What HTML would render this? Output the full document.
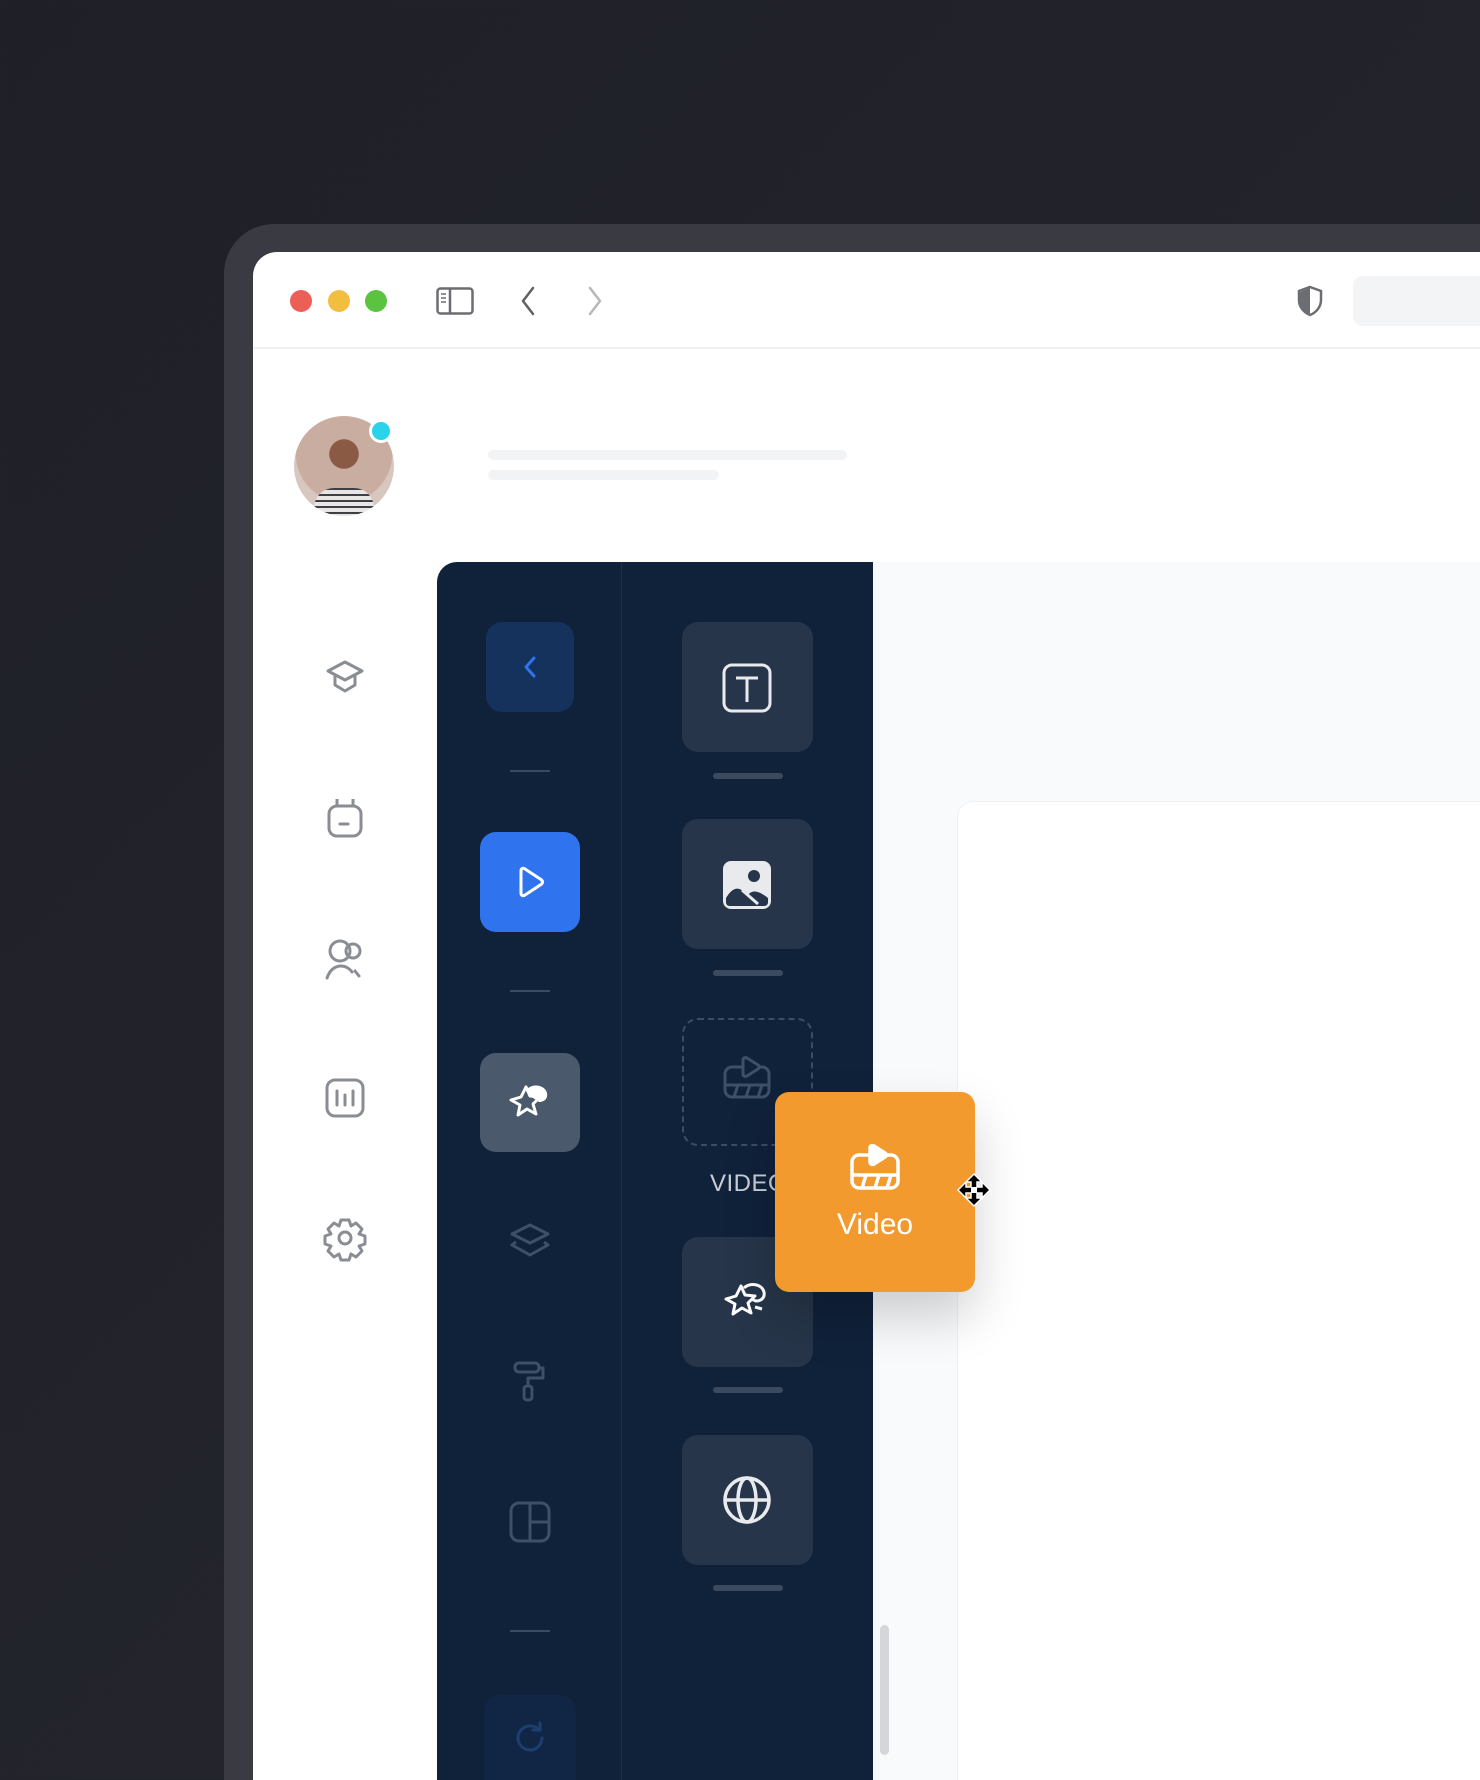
<!DOCTYPE html>
<html><head><meta charset="utf-8"><style>
*{margin:0;padding:0;box-sizing:border-box}
html{width:1480px;height:1780px;overflow:hidden}
body{width:1480px;height:1780px;overflow:hidden;background:linear-gradient(135deg,#1f2027 0%,#23242c 60%,#272830 100%);font-family:"Liberation Sans",sans-serif;position:relative}
.a{position:absolute}
svg{position:absolute;overflow:visible}
.card{position:absolute;left:682px;width:131px;height:130px;border-radius:16px;background:#263549}
.bar{position:absolute;left:713px;width:70px;height:6px;border-radius:3px;background:#3b4a5e}
.ln{position:absolute;left:510px;width:40px;height:2px;background:#3b4a5e}
</style></head><body>
<div class="a" style="left:224px;top:224px;width:1256px;height:1556px;border-radius:50px 0 0 0;background:#3a3b42"></div>
<div class="a" style="left:253px;top:252px;width:1227px;height:1528px;border-radius:24px 0 0 0;background:#fff"></div>
<div class="a" style="left:253px;top:347px;width:1227px;height:2px;background:#f0f1f3"></div>
<div class="a" style="left:290px;top:290px;width:22px;height:22px;border-radius:50%;background:#ec5f57"></div>
<div class="a" style="left:328px;top:290px;width:22px;height:22px;border-radius:50%;background:#f3bd40"></div>
<div class="a" style="left:365px;top:290px;width:22px;height:22px;border-radius:50%;background:#5ac33f"></div>
<svg style="left:436px;top:287px" width="38" height="28" viewBox="0 0 38 28"><rect x="1.5" y="1.5" width="35" height="25" rx="3" fill="none" stroke="#6b6d72" stroke-width="2.5"/><line x1="14" y1="2" x2="14" y2="26" stroke="#6b6d72" stroke-width="2.5"/><path d="M5 7h5M5 11h5M5 15h5" stroke="#6b6d72" stroke-width="1.5"/></svg>
<svg style="left:520px;top:286px" width="16" height="30"><path d="M13 2L3 15L13 28" fill="none" stroke="#5f6165" stroke-width="2.5" stroke-linecap="round" stroke-linejoin="round"/></svg>
<svg style="left:587px;top:286px" width="16" height="30"><path d="M3 2L13 15L3 28" fill="none" stroke="#b5b7ba" stroke-width="2.5" stroke-linecap="round" stroke-linejoin="round"/></svg>
<svg style="left:1296px;top:285px" width="28" height="32" viewBox="0 0 28 32"><path d="M14 2L25 6V15C25 23 19 28 14 30C9 28 3 23 3 15V6Z" fill="none" stroke="#6b6d72" stroke-width="2.5"/><path d="M14 3V29C9 27 4 22 4 15V7Z" fill="#6b6d72"/></svg>
<div class="a" style="left:1353px;top:276px;width:140px;height:50px;border-radius:10px;background:#f3f4f6"></div>
<div class="a" style="left:294px;top:416px;width:100px;height:100px;border-radius:50%;background:radial-gradient(circle at 50% 38%,#8a5a45 0 18%,#c9ada0 19% 60%,#d8c7bf 61%);overflow:hidden"><div class="a" style="left:20px;top:72px;width:60px;height:30px;background:repeating-linear-gradient(0deg,#e8e6e4 0 4px,#3d3f45 4px 6px);border-radius:20px 20px 0 0"></div></div>
<div class="a" style="left:369px;top:419px;width:24px;height:24px;border-radius:50%;background:#29d3ea;border:3px solid #fff"></div>
<div class="a" style="left:488px;top:450px;width:359px;height:10px;border-radius:5px;background:#f2f3f5"></div>
<div class="a" style="left:488px;top:470px;width:231px;height:10px;border-radius:5px;background:#f2f3f5"></div>
<svg style="left:325px;top:658px" width="40" height="40" viewBox="0 0 40 40" fill="none" stroke="#8a8d93" stroke-width="3" stroke-linejoin="round"><path d="M20 4L37 13L20 22L3 13Z"/><path d="M10 17V27L20 33L30 27V17"/></svg>
<svg style="left:326px;top:796px" width="38" height="44" viewBox="0 0 38 44" fill="none" stroke="#8a8d93" stroke-width="3"><rect x="3" y="10" width="32" height="30" rx="8"/><path d="M11 3V10M27 3V10"/><path d="M14 28h8" stroke-linecap="round"/></svg>
<svg style="left:324px;top:938px" width="42" height="42" viewBox="0 0 42 42" fill="none" stroke="#8a8d93" stroke-width="3" stroke-linecap="round"><circle cx="16" cy="13" r="10"/><circle cx="29" cy="13" r="7"/><path d="M3 40C6 31 12 28 17 28C22 28 26 31 28 34"/><path d="M31 33L35 38"/></svg>
<svg style="left:324px;top:1077px" width="42" height="42" viewBox="0 0 42 42" fill="none" stroke="#8a8d93" stroke-width="3" stroke-linecap="round"><rect x="3" y="3" width="36" height="36" rx="8"/><path d="M13 14V28M21 18V28M29 14V28"/></svg>
<svg style="left:324px;top:1217px" width="42" height="42" viewBox="0 0 42 42" fill="none" stroke="#8a8d93" stroke-width="3" stroke-linejoin="round"><path d="M17 3h8l2 6 5-3 6 6-3 5 6 2v8l-6 2 3 5-6 6-5-3-2 6h-8l-2-6-5 3-6-6 3-5-6-2v-8l6-2-3-5 6-6 5 3z"/><circle cx="21" cy="21" r="6"/></svg>
<div class="a" style="left:437px;top:562px;width:436px;height:1218px;border-radius:20px 0 0 0;background:#10213a"></div>
<div class="a" style="left:621px;top:562px;width:1px;height:1218px;background:#1e2f47"></div>
<div class="a" style="left:873px;top:562px;width:607px;height:1218px;background:#f8fafc"></div>
<div class="a" style="left:957px;top:801px;width:523px;height:979px;border-radius:16px 0 0 0;background:#fff;border:1px solid #eef0f3;border-right:none;border-bottom:none"></div>
<div class="a" style="left:880px;top:1625px;width:9px;height:130px;border-radius:5px;background:#d4d6da"></div>
<div class="a" style="left:486px;top:622px;width:88px;height:90px;border-radius:16px;background:#15325d"></div>
<svg style="left:520px;top:655px" width="20" height="24"><path d="M14 3L6 12L14 21" fill="none" stroke="#2f74ee" stroke-width="3" stroke-linecap="round" stroke-linejoin="round"/></svg>
<div class="ln" style="top:770px"></div>
<div class="a" style="left:480px;top:832px;width:100px;height:100px;border-radius:16px;background:#2f74ee"></div>
<svg style="left:516px;top:866px" width="30" height="32" viewBox="0 0 30 32"><path d="M5 5C5 2.5 7 1.5 9 3L25 13.5C27 15 27 17 25 18.5L9 29C7 30.5 5 29.5 5 27Z" fill="none" stroke="#fff" stroke-width="3" stroke-linejoin="round"/></svg>
<div class="ln" style="top:990px"></div>
<div class="a" style="left:480px;top:1053px;width:100px;height:99px;border-radius:16px;background:#4a5a6c"></div>
<svg style="left:505px;top:1078px" width="50" height="50" viewBox="0 0 50 50"><path d="M21 9L25 18L35 19L28 26L31 36L22 31L13 37L15 27L6 22L16 19Z" fill="none" stroke="#fff" stroke-width="3" stroke-linejoin="round"/><path d="M22 11C28 5 40 7 42 15C43 20 40 24 34 24L28 20Z" fill="#fff"/></svg>
<svg style="left:508px;top:1222px" width="44" height="40" viewBox="0 0 44 40" fill="none" stroke="#3d5068" stroke-width="3" stroke-linejoin="round"><path d="M22 3L40 12L22 21L4 12Z"/><path d="M8 20L4 23L22 33L40 23L36 20"/></svg>
<svg style="left:510px;top:1360px" width="40" height="44" viewBox="0 0 40 44" fill="none" stroke="#3d5068" stroke-width="3" stroke-linejoin="round"><rect x="5" y="3" width="24" height="9" rx="4"/><path d="M29 8h4v10H18v8"/><rect x="14" y="26" width="8" height="14" rx="3"/></svg>
<svg style="left:508px;top:1500px" width="44" height="44" viewBox="0 0 44 44" fill="none" stroke="#3d5068" stroke-width="3"><rect x="3" y="3" width="38" height="38" rx="8"/><path d="M22 3V41M22 22H41"/></svg>
<div class="ln" style="top:1630px"></div>
<div class="a" style="left:484px;top:1695px;width:92px;height:85px;border-radius:16px 16px 0 0;background:#112545"></div>
<svg style="left:512px;top:1720px" width="36" height="36" viewBox="0 0 36 36" fill="none" stroke="#1c3f70" stroke-width="3" stroke-linecap="round"><path d="M30 18A12 12 0 1 1 26 9"/><path d="M28 3V10H21"/></svg>
<div class="card" style="top:622px"></div>
<svg style="left:722px;top:663px" width="50" height="50" viewBox="0 0 50 50" fill="none" stroke="#e8eaee" stroke-width="3"><rect x="2" y="2" width="46" height="46" rx="8"/><path d="M14 15H36M25 15V39"/></svg>
<div class="bar" style="top:773px"></div>
<div class="card" style="top:819px"></div>
<svg style="left:722px;top:860px" width="50" height="50" viewBox="0 0 50 50"><rect x="1" y="1" width="48" height="48" rx="8" fill="#e8eaee"/><circle cx="32" cy="16" r="6" fill="#263549"/><path d="M4 38C10 28 16 26 22 32L26 35C30 30 36 30 46 38V42C46 45 44 46 42 46H8C6 46 4 45 4 42Z" fill="#263549"/><path d="M20 30L36 44" stroke="#e8eaee" stroke-width="3"/></svg>
<div class="bar" style="top:970px"></div>
<div class="a" style="left:682px;top:1018px;width:131px;height:128px;border-radius:16px;border:2px dashed #3b4d65"></div>
<svg style="left:722px;top:1055px" width="50" height="50" viewBox="0 0 50 50" fill="none" stroke="#3d5068" stroke-width="3" stroke-linejoin="round"><rect x="3" y="12" width="44" height="30" rx="7"/><path d="M3 30H47M12 42L16 30M24 42L28 30M36 42L40 30"/><path d="M21 5C21 3 23 2 25 3L36 10C37.5 11 37.5 13 36 14L25 21C23 22 21 21 21 19Z" fill="#10213a"/></svg>
<div class="a" style="left:710px;top:1170px;font-size:24px;color:#c9ced6;letter-spacing:0.5px">VIDEO</div>
<div class="card" style="top:1237px"></div>
<svg style="left:722px;top:1277px" width="50" height="50" viewBox="0 0 50 50" fill="none" stroke="#fff" stroke-width="3" stroke-linejoin="round"><path d="M19 9L23 18L33 19L26 26L29 36L20 31L11 37L13 27L4 22L14 19Z"/><path d="M22 11C28 5 40 7 42 15C43 20 40 24 34 24L29 22"/><path d="M33 30L40 32"/></svg>
<div class="bar" style="top:1387px"></div>
<div class="card" style="top:1435px"></div>
<svg style="left:722px;top:1475px" width="50" height="50" viewBox="0 0 50 50" fill="none" stroke="#e8eaee" stroke-width="3.5"><circle cx="25" cy="25" r="22"/><ellipse cx="25" cy="25" rx="9" ry="22"/><path d="M3 25H47"/></svg>
<div class="bar" style="top:1585px"></div>
<div class="a" style="left:775px;top:1092px;width:200px;height:200px;border-radius:14px;background:#f29a2e;box-shadow:0 25px 50px rgba(0,0,0,0.18)"></div>
<svg style="left:849px;top:1143px" width="52" height="50" viewBox="0 0 52 50" fill="none" stroke="#fff" stroke-width="3.5" stroke-linejoin="round"><rect x="3" y="12" width="46" height="33" rx="7"/><path d="M3 32H49M13 45L17 32M26 45L30 32M38 45L42 32"/><path d="M21 5C21 3 23 2 25 3L36 10C37.5 11 37.5 13 36 14L25 21C23 22 21 21 21 19Z" fill="#fff"/></svg>
<div class="a" style="left:775px;top:1208px;width:200px;text-align:center;font-size:30px;color:#fff;font-weight:500">Video</div>
<svg style="left:957px;top:1173px" width="34" height="34" viewBox="0 0 34 34"><path d="M17 1L25 9H20V14H25V9L33 17L25 25V20H20V25H25L17 33L9 25H14V20H9V25L1 17L9 9V14H14V9H9Z" fill="#000" stroke="#fff" stroke-width="1.5"/><rect x="14" y="14" width="6" height="6" fill="#fff"/></svg>
</body></html>
